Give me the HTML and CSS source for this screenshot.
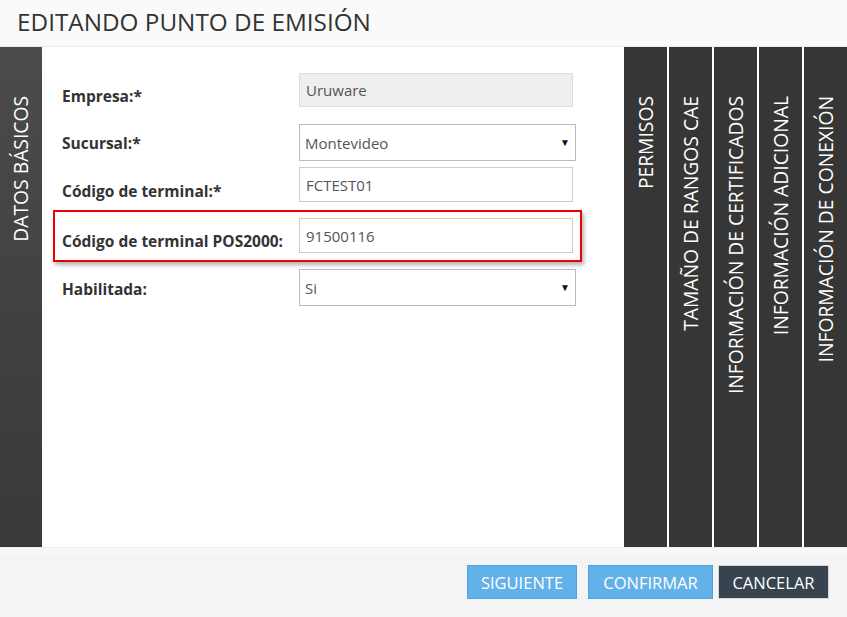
FILE: index.html
```html
<!DOCTYPE html>
<html lang="es">
<head>
<meta charset="utf-8">
<title>Editando punto de emisión</title>
<link rel="stylesheet" href="styles.css">
</head>
<body>
<div class="dialog">
  <div class="header">
    <h1 class="title">EDITANDO PUNTO DE EMISIÓN</h1>
  </div>
  <div class="main">
    <div class="tab tab-left"><span class="tab-label">DATOS BÁSICOS</span></div>
    <div class="content">
      <div class="form">
        <div class="row row-empresa">
          <label class="label">Empresa:*</label>
          <div class="field field-disabled">Uruware</div>
        </div>
        <div class="row row-sucursal">
          <label class="label">Sucursal:*</label>
          <div class="field field-select">Montevideo<span class="arrow">▼</span></div>
        </div>
        <div class="row row-codigo">
          <label class="label">Código de terminal:*</label>
          <div class="field">FCTEST01</div>
        </div>
        <div class="row row-pos highlight">
          <label class="label">Código de terminal POS2000:</label>
          <div class="field">91500116</div>
        </div>
        <div class="row row-hab">
          <label class="label">Habilitada:</label>
          <div class="field field-select">Si<span class="arrow">▼</span></div>
        </div>
      </div>
    </div>
    <div class="tabs-right">
      <div class="tab"><span class="tab-label">PERMISOS</span></div>
      <div class="tab"><span class="tab-label">TAMAÑO DE RANGOS CAE</span></div>
      <div class="tab"><span class="tab-label">INFORMACIÓN DE CERTIFICADOS</span></div>
      <div class="tab"><span class="tab-label">INFORMACIÓN ADICIONAL</span></div>
      <div class="tab"><span class="tab-label">INFORMACIÓN DE CONEXIÓN</span></div>
    </div>
  </div>
  <div class="footer">
    <button class="btn btn-primary btn-next">SIGUIENTE</button>
    <button class="btn btn-primary btn-confirm">CONFIRMAR</button>
    <button class="btn btn-dark">CANCELAR</button>
  </div>
</div>
</body>
</html>
```
FILE: styles.css
```css
* { box-sizing: border-box; }
html, body { margin: 0; padding: 0; }
body {
  font-family: "Open Sans", "Noto Sans", "Liberation Sans", sans-serif;
  color: #333;
  background: #fff;
}
.dialog {
  width: 847px;
  height: 617px;
  display: flex;
  flex-direction: column;
  overflow: hidden;
}
.header {
  height: 47px;
  background: #fafafa;
  border-bottom: 1px solid #ececec;
  padding-left: 17px;
  display: flex;
  align-items: center;
}
.title {
  margin: 0;
  font-weight: 400;
  font-size: 24.3px;
  color: #333;
  line-height: 1;
  padding-bottom: 2px;
}
.main {
  height: 500px;
  display: flex;
}
.tab {
  width: 43px;
  background: #363636;
  color: #fff;
  display: flex;
  justify-content: center;
  padding-top: 49px;
}
.tab-left {
  width: 42px;
  background: linear-gradient(#4b4b4b, #393939);
}
.tab-label {
  writing-mode: vertical-rl;
  transform: rotate(180deg);
  font-size: 19.3px;
  line-height: 22px;
  white-space: nowrap;
  height: max-content;
}
.content {
  flex: 1;
  padding: 25px 0 0 20px;
}
.form {
  width: 511px;
  display: flex;
  flex-direction: column;
}
.row {
  display: flex;
  align-items: center;
}
.label {
  width: 237px;
  flex: none;
  font-weight: 700;
  font-size: 15.5px;
  color: #333;
}
.row-empresa .label { padding-top: 13px; }
.row-sucursal .label { padding-top: 0; }
.row-codigo .label { padding-top: 12px; }
.row-pos .label { padding-top: 10px; }
.row-hab .label { padding-top: 3px; }
.field {
  flex: none;
  width: 274px;
  height: 35px;
  border: 1px solid #ccc;
  background: #fff;
  font-size: 15px;
  color: #555;
  padding-left: 6px;
  display: flex;
  align-items: center;
  position: relative;
}
.field-disabled {
  background: #eeeeee;
  border-color: #dddddd;
  height: 34px;
}
.field-select {
  width: 277px;
  height: 37px;
  border-color: #bbb;
  padding-left: 5px;
}
.arrow {
  position: absolute;
  right: 5px;
  top: 10px;
  font-size: 10px;
  color: #111;
}
.row-sucursal { margin-top: 17px; }
.row-codigo { margin-top: 6px; }
.row-pos { margin-top: 8px; }
.row-hab { margin-top: 7px; }
.highlight {
  margin-left: -9px;
  margin-right: -9px;
  padding: 6px 7px 7px 7px;
  border: 2px solid #ee0000;
  box-shadow: 2px 3px 4px rgba(0, 0, 0, 0.3);
}
.tabs-right {
  display: flex;
  gap: 2px;
}
.footer {
  flex: 1;
  background: linear-gradient(#f9f9f9, #f4f4f4 12px);
  border-top: 1px solid #efefef;
  display: flex;
  justify-content: flex-end;
  align-items: flex-start;
  padding: 17px 18px 0 0;
}
.btn {
  height: 34px;
  font-family: inherit;
  font-size: 16.5px;
  color: #fff;
  border: 1px solid;
  padding: 0;
  cursor: pointer;
}
.btn-primary {
  background: #63b1e9;
  border-color: #4ea2e2;
}
.btn-next { width: 110px; margin-right: 11px; }
.btn-confirm { width: 125px; margin-right: 5px; }
.btn-dark {
  width: 111px;
  background: #384350;
  border-color: #d6d6d6;
}
```
